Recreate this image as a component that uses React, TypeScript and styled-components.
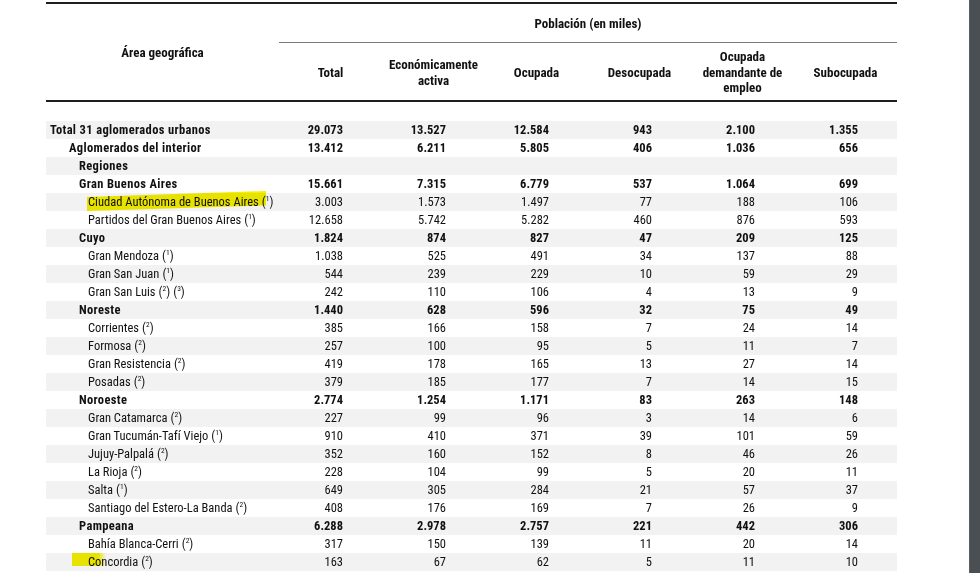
import React from "react";
import styled, { createGlobalStyle } from "styled-components";

const GlobalStyle = createGlobalStyle`
  * { box-sizing: border-box; }
  html, body { margin: 0; padding: 0; background: #ffffff; }
  body {
    font-family: "Roboto", "Liberation Sans", Arial, sans-serif;
    color: #111111;
    overflow: hidden;
  }
`;

const Viewer = styled.div`
  display: flex;
  width: 980px;
  height: 573px;
  overflow: hidden;
`;

const Page = styled.div`
  flex: 1;
  background: #ffffff;
  padding: 2px 0 0 46px;
  overflow: hidden;
`;

const SideStrip = styled.div`
  width: 11px;
  flex: none;
  background: #4a4f53;
  border-left: 1px solid #5a5f63;
`;

const Table = styled.div`
  width: 851px;
  font-size: 12.5px;
  font-stretch: 80%;
`;

const COLS = "233px repeat(6, 103px)";

const Header = styled.div`
  display: grid;
  grid-template-columns: ${COLS};
  grid-template-rows: 39px 57px;
  border-top: 2px solid #1e1e1e;
  border-bottom: 2px solid #1e1e1e;
  font-size: 13px;
  font-weight: 700;
  font-stretch: 81%;
`;

const AreaHead = styled.div`
  grid-column: 1;
  grid-row: 1 / span 2;
  display: flex;
  align-items: center;
  justify-content: center;
`;

const GroupHead = styled.div`
  grid-column: 2 / span 6;
  grid-row: 1;
  display: flex;
  align-items: center;
  justify-content: center;
  border-bottom: 1px solid #7a7a7a;
`;

const ColHead = styled.div`
  grid-row: 2;
  display: flex;
  align-items: center;
  justify-content: center;
  text-align: center;
  line-height: 15.5px;
  padding-top: 2px;
`;

const Body = styled.div`
  margin-top: 19px;
`;

const Row = styled.div<{ $shaded: boolean; $bold: boolean }>`
  display: grid;
  grid-template-columns: ${COLS};
  height: 18px;
  line-height: 18px;
  background: ${(p) => (p.$shaded ? "#f2f2f2" : "#ffffff")};
  font-weight: ${(p) => (p.$bold ? 700 : 450)};
  font-stretch: ${(p) => (p.$bold ? "85%" : "80%")};
  white-space: nowrap;
`;

const Label = styled.div<{ $indent: number; $bold: boolean; $mark?: "slant" | "stub" }>`
  position: relative;
  padding-left: ${(p) => p.$indent}px;
  letter-spacing: ${(p) => (p.$bold ? "0.35px" : "0")};

  ${(p) =>
    p.$mark === "slant"
      ? `&::before {
          content: "";
          position: absolute;
          left: 41px;
          top: -2px;
          width: 179px;
          height: 20px;
          background: #f5ef00;
          clip-path: polygon(0 30%, 100% 0, 100% 72%, 0 100%);
          mix-blend-mode: multiply;
        }`
      : ""}

  ${(p) =>
    p.$mark === "stub"
      ? `&::before {
          content: "";
          position: absolute;
          left: 26px;
          top: 0;
          width: 34px;
          height: 13px;
          background: linear-gradient(90deg, #f5ef00 0%, #f5ef00 78%, rgba(245,239,0,0) 100%);
          mix-blend-mode: multiply;
        }`
      : ""}
`;

const Num = styled.div`
  text-align: right;
  padding-right: 39px;
`;

const Paren = styled.span`
  margin-left: 3px;
  font-weight: 450;
  font-stretch: 80%;
`;

const Note = styled.sup`
  font-size: 7.5px;
  line-height: 0;
  vertical-align: 5px;
`;

type RowData = {
  label: string;
  level: 0 | 1 | 2 | 3;
  notes?: number[];
  vals: string[];
  mark?: "slant" | "stub";
};

const INDENT = [4, 23, 33, 42];

const rows: RowData[] = [
  { label: "Total 31 aglomerados urbanos", level: 0, vals: ["29.073", "13.527", "12.584", "943", "2.100", "1.355"] },
  { label: "Aglomerados del interior", level: 1, vals: ["13.412", "6.211", "5.805", "406", "1.036", "656"] },
  { label: "Regiones", level: 2, vals: [] },
  { label: "Gran Buenos Aires", level: 2, vals: ["15.661", "7.315", "6.779", "537", "1.064", "699"] },
  { label: "Ciudad Autónoma de Buenos Aires", level: 3, notes: [1], mark: "slant", vals: ["3.003", "1.573", "1.497", "77", "188", "106"] },
  { label: "Partidos del Gran Buenos Aires", level: 3, notes: [1], vals: ["12.658", "5.742", "5.282", "460", "876", "593"] },
  { label: "Cuyo", level: 2, vals: ["1.824", "874", "827", "47", "209", "125"] },
  { label: "Gran Mendoza", level: 3, notes: [1], vals: ["1.038", "525", "491", "34", "137", "88"] },
  { label: "Gran San Juan", level: 3, notes: [1], vals: ["544", "239", "229", "10", "59", "29"] },
  { label: "Gran San Luis", level: 3, notes: [2, 3], vals: ["242", "110", "106", "4", "13", "9"] },
  { label: "Noreste", level: 2, vals: ["1.440", "628", "596", "32", "75", "49"] },
  { label: "Corrientes", level: 3, notes: [2], vals: ["385", "166", "158", "7", "24", "14"] },
  { label: "Formosa", level: 3, notes: [2], vals: ["257", "100", "95", "5", "11", "7"] },
  { label: "Gran Resistencia", level: 3, notes: [2], vals: ["419", "178", "165", "13", "27", "14"] },
  { label: "Posadas", level: 3, notes: [2], vals: ["379", "185", "177", "7", "14", "15"] },
  { label: "Noroeste", level: 2, vals: ["2.774", "1.254", "1.171", "83", "263", "148"] },
  { label: "Gran Catamarca", level: 3, notes: [2], vals: ["227", "99", "96", "3", "14", "6"] },
  { label: "Gran Tucumán-Tafí Viejo", level: 3, notes: [1], vals: ["910", "410", "371", "39", "101", "59"] },
  { label: "Jujuy-Palpalá", level: 3, notes: [2], vals: ["352", "160", "152", "8", "46", "26"] },
  { label: "La Rioja", level: 3, notes: [2], vals: ["228", "104", "99", "5", "20", "11"] },
  { label: "Salta", level: 3, notes: [1], vals: ["649", "305", "284", "21", "57", "37"] },
  { label: "Santiago del Estero-La Banda", level: 3, notes: [2], vals: ["408", "176", "169", "7", "26", "9"] },
  { label: "Pampeana", level: 2, vals: ["6.288", "2.978", "2.757", "221", "442", "306"] },
  { label: "Bahía Blanca-Cerri", level: 3, notes: [2], vals: ["317", "150", "139", "11", "20", "14"] },
  { label: "Concordia", level: 3, notes: [2], mark: "stub", vals: ["163", "67", "62", "5", "11", "10"] },
];

function Notes({ notes }: { notes?: number[] }) {
  if (!notes) return null;
  return (
    <>
      {notes.map((n) => (
        <Paren key={n}>
          (<Note>{n}</Note>)
        </Paren>
      ))}
    </>
  );
}

export default function App() {
  return (
    <>
      <GlobalStyle />
      <Viewer>
        <Page>
          <Table>
            <Header>
              <AreaHead>Área geográfica</AreaHead>
              <GroupHead>Población (en miles)</GroupHead>
              <ColHead>Total</ColHead>
              <ColHead>
                Económicamente
                <br />
                activa
              </ColHead>
              <ColHead>Ocupada</ColHead>
              <ColHead>Desocupada</ColHead>
              <ColHead>
                Ocupada
                <br />
                demandante de
                <br />
                empleo
              </ColHead>
              <ColHead>Subocupada</ColHead>
            </Header>
            <Body>
              {rows.map((r, i) => {
                const vals = r.vals.length ? r.vals : ["", "", "", "", "", ""];
                const bold = r.level < 3;
                return (
                  <Row key={r.label} $shaded={i % 2 === 0} $bold={bold}>
                    <Label $indent={INDENT[r.level]} $bold={bold} $mark={r.mark}>
                      {r.label}
                      <Notes notes={r.notes} />
                    </Label>
                    {vals.map((v, j) => (
                      <Num key={j}>{v}</Num>
                    ))}
                  </Row>
                );
              })}
            </Body>
          </Table>
        </Page>
        <SideStrip />
      </Viewer>
    </>
  );
}
